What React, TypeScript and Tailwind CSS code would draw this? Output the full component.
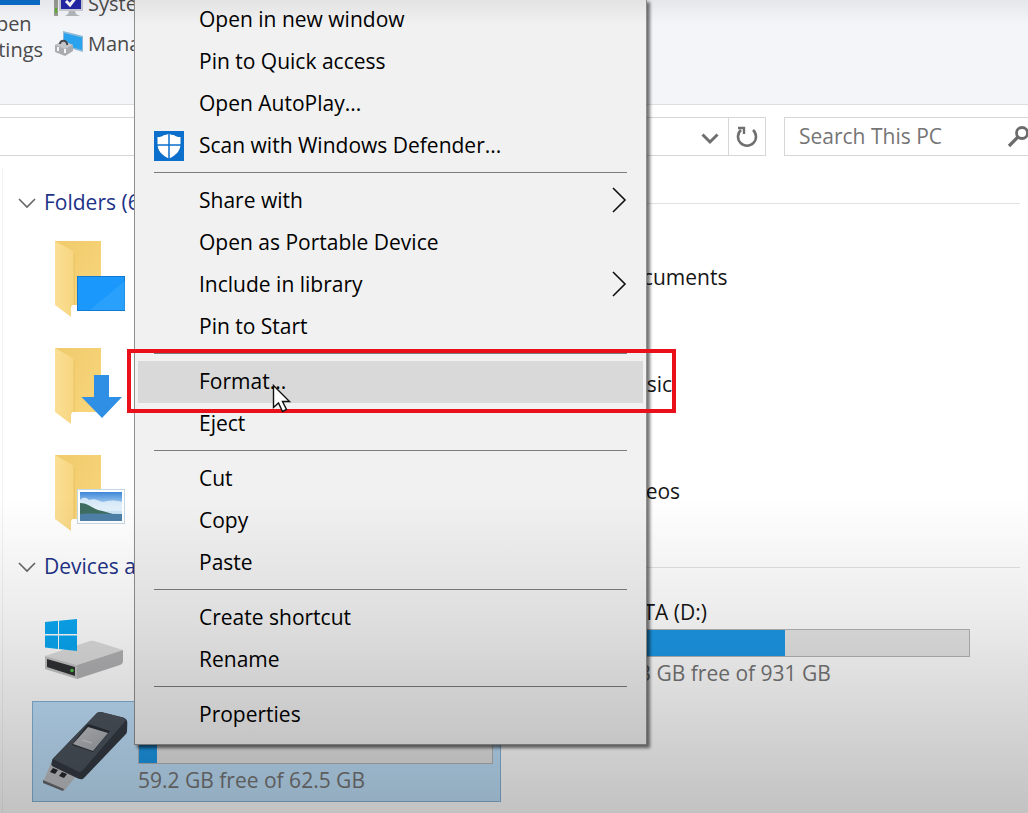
import React from 'react';

type MenuEntry = {
  label: string;
  icon?: React.ReactNode;
  submenu?: boolean;
  active?: boolean;
};

const menuGroups: MenuEntry[][] = [
  [
    { label: 'Open in new window' },
    { label: 'Pin to Quick access' },
    { label: 'Open AutoPlay...' },
    { label: 'Scan with Windows Defender...', icon: <DefenderIcon /> },
  ],
  [
    { label: 'Share with', submenu: true },
    { label: 'Open as Portable Device' },
    { label: 'Include in library', submenu: true },
    { label: 'Pin to Start' },
  ],
  [{ label: 'Format...', active: true }, { label: 'Eject' }],
  [{ label: 'Cut' }, { label: 'Copy' }, { label: 'Paste' }],
  [{ label: 'Create shortcut' }, { label: 'Rename' }],
  [{ label: 'Properties' }],
];

function DefenderIcon() {
  return (
    <svg viewBox="0 0 30 30" className="w-[30px] h-[30px]">
      <rect width="30" height="30" fill="#0b6fcb" />
      <path d="M15 2.500c2 1.200 3.500 1.600 5 1.500 1.500 1.500 3.500 2 6.500 2v7c0 6.500-4 11-11.500 14.500C7.500 24 3.500 19.500 3.500 13V6C6.500 6 8.500 5.500 10 4c1.500 0 3-.4 5-1.500z" fill="#fff" />
      <path d="M15 2v26M3 14h24" stroke="#0b6fcb" strokeWidth="1.500" />
    </svg>
  );
}

function FolderIcon({ children }: { children?: React.ReactNode }) {
  return (
    <svg viewBox="0 0 96 96" className="w-24 h-24 shrink-0">
      <defs>
        <linearGradient id="folderBack" x1="0" y1="0" x2="1" y2="1">
          <stop offset="0" stopColor="#f0cb6c" />
          <stop offset="1" stopColor="#f9d67c" />
        </linearGradient>
        <linearGradient id="folderFlap" x1="0" y1="0" x2="1" y2="0">
          <stop offset="0" stopColor="#fbdf94" />
          <stop offset="1" stopColor="#f7d681" />
        </linearGradient>
      </defs>
      <path d="M21 10h46v64H30z" fill="url(#folderBack)" />
      <path d="M39 22l2 1v51h-2z" fill="#e6bd5c" opacity=".5" />
      <path d="M21 10l16 9c2 1 2.500 2 2.500 4v50l-2.500 3v10L21 74z" fill="url(#folderFlap)" />
      {children}
    </svg>
  );
}

function DesktopFolderIcon() {
  return (
    <FolderIcon>
      <rect x="43.500" y="45.500" width="47" height="34" fill="#1a98fb" stroke="#1179cf" />
      <path d="M56 79L91 50v29z" fill="#3aa8ff" opacity=".5" />
    </FolderIcon>
  );
}

function DownloadsFolderIcon() {
  return (
    <FolderIcon>
      <path d="M60 37h15v22h13L68 80 47.500 59H60z" fill="#2f8fe4" />
    </FolderIcon>
  );
}

function PicturesFolderIcon() {
  return (
    <FolderIcon>
      <defs>
        <linearGradient id="sky" x1="0" y1="0" x2="0" y2="1">
          <stop offset="0" stopColor="#3f86d8" />
          <stop offset=".5" stopColor="#bcdcf4" />
          <stop offset="1" stopColor="#e4f1f8" />
        </linearGradient>
      </defs>
      <rect x="43.500" y="44.500" width="47" height="34" fill="#fff" stroke="#c5d8e6" />
      <rect x="46" y="47" width="42" height="29" fill="url(#sky)" />
      <path d="M46 55c3-3 6-3 9 0 6-2 9 1 14 2 6-2 12-2 19 0v9H46z" fill="#e9f4fb" opacity=".8" />
      <path d="M46 58c8 0 12 5 18 7 6 1 12 3 17 5H46z" fill="#3e6e60" />
      <path d="M46 69c14-1 28 0 42 0v7H46z" fill="#4d80a8" />
    </FolderIcon>
  );
}

function SystemDriveIcon() {
  return (
    <svg viewBox="0 0 96 96" className="w-24 h-24 shrink-0">
      <path d="M11 61L56 46c2-.5 4 0 5 .3L89 55 43 70z" fill="#dededf" />
      <path d="M43 70l46-15v11c0 2-1 3-3 4L43 84z" fill="#b2b2b4" />
      <path d="M11 61l32 9v14l-32-10z" fill="#c4c4c4" />
      <path d="M13 64l28 8v9l-28-9z" fill="#303133" />
      <circle cx="38" cy="75.500" r="1.800" fill="#55c04a" />
      <path d="M11 27l13-1.200V39H11zM25 25.700L43 24v15H25zM11 40.500h13V54l-13-1.500zM25 40.500h18V56l-18-2z" fill="#0aa8f4" />
    </svg>
  );
}

function UsbDriveIcon() {
  return (
    <svg viewBox="0 0 96 96" className="w-24 h-24 shrink-0">
      <defs>
        <linearGradient id="usbPanel" x1="0" y1="0" x2="1" y2="1">
          <stop offset="0" stopColor="#c2c4c7" />
          <stop offset="1" stopColor="#a2a5aa" />
        </linearGradient>
      </defs>
      <path d="M17 61l26 12-12 15c-1 1-2 1-3 .5L10 81c-1-.5-1-1 0-3z" fill="#bfc2c6" />
      <path d="M9 78l21 9-1 2-20-8z" fill="#66696d" />
      <path d="M19 66l5 2-3 4-5-2zM28 70l5 2-3 4-5-2z" fill="#25282c" />
      <path d="M62 12c2-2 4-2.500 7-1.500l20 5c3 1 4.500 3 4.300 6L93 29c0 2-1 3-2 4L50 76c-2 2-4 1-6 .5L20 65c-2-1-3-2-2.500-4l1-4z" fill="#343a43" />
      <path d="M62 12c2-2 4-2.500 7-1.500l20 5c2.500 1 3 3 1 5L49 68c-2 2-3 2.300-5 1.500L19 57z" fill="#4b535c" />
      <path d="M52 24c1-1.500 2-2 4-1.500L76 29 59 50 38 43z" fill="#2a3038" />
      <path d="M54 25l20 6-15 18-20-7z" fill="url(#usbPanel)" />
      <path d="M48 38l10 3" stroke="#d6d9dc" />
    </svg>
  );
}

function SystemIcon() {
  return (
    <svg viewBox="0 0 30 32" className="w-[30px] h-8 shrink-0">
      <rect x="0" y="4" width="4" height="24" fill="#9a9d96" />
      <rect x="1" y="20" width="2" height="5" fill="#5db32f" />
      <path d="M5 6h24v17H5z" fill="#c9ccd6" />
      <path d="M7 6h20v15H7z" fill="#2226a8" />
      <path d="M12 13l4 4 7-9" fill="none" stroke="#fff" strokeWidth="3" />
      <path d="M15 23h6l1 3 4 2H11l3-2z" fill="#b3b6ba" />
    </svg>
  );
}

function ManageIcon() {
  return (
    <svg viewBox="0 0 30 26" className="w-[30px] h-[26px] shrink-0">
      <path d="M9 0l20 5v16l-7-2L9 14z" fill="#8db9d6" />
      <path d="M10 2l18 4.500V19l-18-5z" fill="#2aa3ee" />
      <path d="M1 14l8-4 10 4v6l-8 5-10-4z" fill="#a9adb1" />
      <path d="M1 14l8-4 10 4-8 4z" fill="#c3c6c9" />
      <path d="M6 13c0-5 8-4 7 1" fill="none" stroke="#44484c" strokeWidth="2" />
      <path d="M4 16v4M11 18v4" stroke="#f4f5f6" strokeWidth="2" />
    </svg>
  );
}

interface TileProps {
  icon?: React.ReactNode;
  name?: string;
  used?: number;
  caption?: string;
  selected?: boolean;
}

function Tile({ icon, name, used, caption, selected }: TileProps) {
  return (
    <div
      className={`flex h-[101px] items-center gap-2 border px-px pb-1 ${
        selected ? 'border-[#84b4da] bg-[#bfe0fa]' : 'border-transparent'
      }`}
    >
      {icon ?? <div className="w-24 shrink-0" />}
      {used === undefined ? (
        <p className="pb-1 leading-7">{name}</p>
      ) : (
        <div className="w-[355px]">
          <p className="h-7 leading-7">{name}</p>
          <div className="mt-[3px] h-7 border border-[#b5b5b5] bg-[#e6e6e6]">
            <div className="h-full bg-[#1c99e8]" style={{ width: `${used}%` }} />
          </div>
          <p className="mt-0.5 leading-7 text-[#757575]">{caption}</p>
        </div>
      )}
    </div>
  );
}

function Section({ title, children }: { title: string; children: React.ReactNode }) {
  return (
    <section>
      <h2 className="mb-[5px] flex h-11 items-center gap-2 pl-[15px] pr-2 text-[#1e3287]">
        <svg viewBox="0 0 18 12" className="h-3 w-[18px] shrink-0" fill="none" stroke="#666" strokeWidth="1.600">
          <path d="M1 2l8 8 8-8" />
        </svg>
        {title}
        <span className="h-px flex-1 bg-[#e2e2e2]" />
      </h2>
      <div className="grid grid-cols-[469px_469px] gap-x-2 gap-y-1.5 pl-[29px]">{children}</div>
    </section>
  );
}

function ContextMenu() {
  return (
    <div
      role="menu"
      className="absolute -top-px left-[134px] w-[513px] border-x border-b border-[#909090] bg-[#f1f1f1] px-[3px] pb-2 text-black shadow-[3px_3px_3px_rgba(0,0,0,0.55)]"
    >
      {menuGroups.map((group, i) => (
        <React.Fragment key={i}>
          {i > 0 && <div role="separator" className="mx-4 mt-[5px] mb-[7px] h-px bg-[#7c7c7c]" />}
          {group.map((entry) => (
            <button
              key={entry.label}
              type="button"
              role="menuitem"
              className={`flex h-[42px] w-full items-center pl-4 pr-4 text-left ${entry.active ? 'bg-[#d9d9d9]' : ''}`}
            >
              <span className="w-[45px] shrink-0">{entry.icon}</span>
              <span className="flex-1">{entry.label}</span>
              {entry.submenu && (
                <svg viewBox="0 0 16 28" className="h-7 w-4" fill="none" stroke="#111" strokeWidth="1.600">
                  <path d="M2 1l12 12L2 25" />
                </svg>
              )}
            </button>
          ))}
        </React.Fragment>
      ))}
    </div>
  );
}

export default function App() {
  return (
    <div className="relative flex min-h-screen flex-col overflow-hidden bg-white font-['Open_Sans','Noto_Sans',sans-serif] text-[21px] text-[#161616]">
      <header className="flex h-[105px] items-start border-b border-[#dcdee2] bg-[#f4f5f9] text-[20px] text-[#4a4a4a]">
        <button type="button" className="-ml-9 flex w-[84px] shrink-0 flex-col items-center leading-[26px]">
          <span className="mb-1.5 h-[5px] w-[68px] bg-[#0b6fcb]" />
          <span>Open</span>
          <span>Settings</span>
        </button>
        <div className="-mt-4 ml-1.5 flex shrink-0 flex-col">
          <button type="button" className="flex h-10 items-center gap-1">
            <SystemIcon />
            System properties
          </button>
          <button type="button" className="flex h-10 items-center gap-1">
            <ManageIcon />
            Manage
          </button>
        </div>
      </header>

      <div className="flex gap-[18px] py-3">
        <div className="flex h-[39px] flex-1 justify-end border border-l-0 border-[#d6d6d6]">
          <button type="button" aria-label="Previous locations" className="flex w-9 items-center justify-center">
            <svg viewBox="0 0 18 12" className="mt-1 h-3 w-[18px]" fill="none" stroke="#6f6f6f" strokeWidth="3">
              <path d="M1.500 1.500L9 9l7.500-7.500" />
            </svg>
          </button>
          <button type="button" aria-label="Refresh" className="flex w-[37px] items-center justify-center border-l border-[#d6d6d6]">
            <svg viewBox="0 0 24 24" className="h-6 w-6" fill="none" stroke="#6f6f6f" strokeWidth="2.600">
              <path d="M18 5A9 9 0 1 1 6 5" />
              <path d="M3 3h6v6" strokeWidth="2.400" />
            </svg>
          </button>
        </div>
        <div className="flex h-[39px] w-[244px] items-center overflow-hidden border border-r-0 border-[#d6d6d6] pl-3.5">
          <input
            type="text"
            aria-label="Search This PC"
            placeholder="Search This PC"
            className="w-[208px] shrink-0 bg-transparent outline-none placeholder:text-[#757575]"
          />
          <svg viewBox="0 0 26 24" className="h-6 w-[26px] shrink-0" fill="none" stroke="#6b6b6b" strokeWidth="2.800">
            <circle cx="15" cy="8" r="5.500" />
            <path d="M11 12L2 21" strokeWidth="3.200" />
          </svg>
        </div>
      </div>

      <main className="ml-0.5 flex-1 border-l border-[#f2f2f2] pt-[13px]">
        <Section title="Folders (6)">
          <Tile icon={<DesktopFolderIcon />} />
          <Tile name="Documents" />
          <Tile icon={<DownloadsFolderIcon />} />
          <Tile name="Music" />
          <Tile icon={<PicturesFolderIcon />} />
          <Tile name="Videos" />
        </Section>
        <Section title="Devices and drives (3)">
          <Tile icon={<SystemDriveIcon />} />
          <Tile name="DATA (D:)" used={48} caption="483 GB free of 931 GB" />
          <Tile icon={<UsbDriveIcon />} used={5} caption="59.2 GB free of 62.5 GB" selected />
        </Section>
      </main>

      <ContextMenu />

      {/* vignette over the window */}
      <div className="pointer-events-none absolute inset-0 bg-[linear-gradient(to_bottom,rgba(0,0,0,0.06)_0%,transparent_3%,transparent_61%,rgba(0,0,0,0.08)_76%,rgba(0,0,0,0.24)_100%)]" />

      {/* highlighted command */}
      <div className="pointer-events-none absolute top-[349px] left-[127px] h-16 w-[549px] border-4 border-[#e9101a]" />
      <svg viewBox="0 0 20 30" className="pointer-events-none absolute top-[384px] left-[272px] h-[30px] w-5">
        <path d="M1.500 1.500v22l5-4.500 4 8.500 4-2-4-8h7z" fill="#fff" stroke="#111" strokeWidth="1.400" />
      </svg>
    </div>
  );
}
